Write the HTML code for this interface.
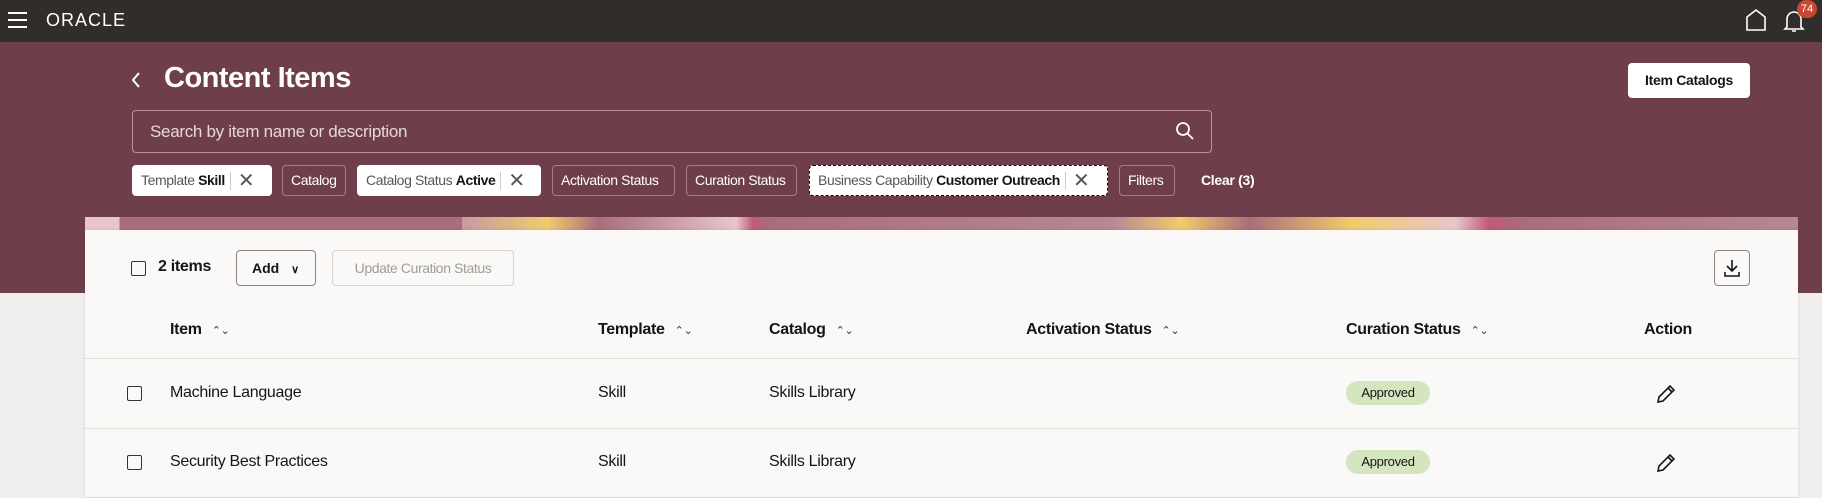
<!DOCTYPE html>
<html><head><meta charset="utf-8"><style>
*{box-sizing:border-box;margin:0;padding:0}
body{width:1822px;height:498px;overflow:hidden;font-family:"Liberation Sans",sans-serif;background:#f1efed;position:relative;color:#161513}
.a{position:absolute}
.top{left:0;top:0;width:1822px;height:42px;background:#312d2a}
.ban{left:0;top:42px;width:1822px;height:251px;background:#6f3e4b}
.chip{position:absolute;top:165px;height:31px;border:1px solid #a77d87;border-radius:4px;color:#fff;font-size:14px;letter-spacing:-0.4px;line-height:29px;padding:0 8px;white-space:nowrap;overflow:hidden}
.chip.w{background:#fff;color:#5a5551;border-color:#fff}
.chip.w b{color:#161513}
.x{display:inline-block;border-left:1px solid #ccc;height:18px;vertical-align:middle;margin-left:5px;padding-left:7px;line-height:18px;font-size:20px;color:#555}
.hd{position:absolute;top:321px;font-size:16px;font-weight:bold;letter-spacing:-0.3px}
.cell{position:absolute;font-size:16px;letter-spacing:-0.3px}
.cb{position:absolute;width:15px;height:15px;border:1.5px solid #333;border-radius:2px}
.pill{position:absolute;left:1346px;width:84px;height:24px;border-radius:12px;background:#d4e6c0;font-size:13px;text-align:center;line-height:24px;letter-spacing:-0.3px}
.line{position:absolute;left:85px;width:1713px;height:1px;background:#e0dedb}
.sort{font-size:11px;color:#333;margin-left:10px;font-weight:normal}
</style></head><body>
<div class="a top"></div>
<div class="a" style="left:8px;top:12px;width:19px;height:2px;background:#fff;box-shadow:0 7px 0 #fff,0 14px 0 #fff"></div>
<div class="a" style="left:46px;top:10px;color:#fff;font-size:18px;letter-spacing:1px">ORACLE</div>
<svg class="a" style="left:1745px;top:8px" width="22" height="24" viewBox="0 0 22 24"><path d="M2 22V9L11 2L20 9V22Z" fill="none" stroke="#fff" stroke-width="1.6"/></svg>
<svg class="a" style="left:1783px;top:8px" width="22" height="26" viewBox="0 0 22 26"><path d="M4 19V11a7 7 0 0 1 14 0v8l2 2H2z M9 23h4" fill="none" stroke="#fff" stroke-width="1.6"/></svg>
<div class="a" style="left:1797px;top:0;width:20px;height:18px;border-radius:9px;background:#c74634;color:#fff;font-size:11px;text-align:center;line-height:18px">74</div>
<div class="a ban"></div>
<div class="a" style="left:85px;top:217px;width:1713px;height:14px;background:linear-gradient(90deg,#e8c6cc 0,#e8c6cc 2%,#a86e7c 2%,#a86e7c 22%,#c59aa3 22%,#f1cc6c 27%,#a86e7c 30%,#e8c6cc 38%,#c05a78 39%,#a86e7c 40%,#b88794 60%,#f1cc6c 64%,#a86e7c 68%,#f1cc6c 74%,#e8c6cc 80%,#c05a78 82%,#a86e7c 84%,#b88794 100%)"></div>
<svg class="a" style="left:130px;top:71px" width="12" height="18"><path d="M9 2L3 9L9 16" fill="none" stroke="#fff" stroke-width="2"/></svg>
<div class="a" style="left:164px;top:62px;color:#fff;font-size:29px;font-weight:bold;letter-spacing:-0.5px">Content Items</div>
<div class="a" style="left:1628px;top:63px;width:122px;height:35px;background:#fff;border-radius:4px;font-size:14px;font-weight:bold;text-align:center;line-height:35px;letter-spacing:-0.3px">Item Catalogs</div>
<div class="a" style="left:132px;top:110px;width:1080px;height:43px;border:1px solid #b8959e;border-radius:4px;color:#e6d8dc;font-size:17px;line-height:41px;padding-left:17px;letter-spacing:-0.3px">Search by item name or description</div>
<svg class="a" style="left:1175px;top:121px" width="20" height="20"><circle cx="8" cy="8" r="6" fill="none" stroke="#fff" stroke-width="1.8"/><path d="M12.5 12.5L18 18" stroke="#fff" stroke-width="1.8"/></svg>
<div class="chip w" style="left:132px;width:140px">Template <b>Skill</b><span class="x">✕</span></div>
<div class="chip" style="left:282px;width:64px">Catalog</div>
<div class="chip w" style="left:357px;width:184px">Catalog Status <b>Active</b><span class="x">✕</span></div>
<div class="chip" style="left:552px;width:123px">Activation Status</div>
<div class="chip" style="left:686px;width:111px">Curation Status</div>
<div class="chip w" style="left:809px;width:299px;border:1px dashed #000">Business Capability <b>Customer Outreach</b><span class="x">✕</span></div>
<div class="chip" style="left:1119px;width:56px">Filters</div>
<div class="a" style="left:1201px;top:165px;color:#fff;font-size:14px;font-weight:bold;line-height:31px;letter-spacing:-0.3px">Clear (3)</div>
<div class="a" style="left:85px;top:230px;width:1713px;height:268px;background:#faf9f8;box-shadow:0 0 4px rgba(0,0,0,.1)"></div>
<div class="cb" style="left:131px;top:261px"></div>
<div class="a" style="left:158px;top:258px;font-size:16px;font-weight:bold;letter-spacing:-0.3px">2 items</div>
<div class="a" style="left:236px;top:250px;width:80px;height:36px;border:1px solid #8a8582;border-radius:4px;font-size:14px;font-weight:bold;line-height:34px;padding-left:15px">Add <span style="font-size:11px;margin-left:8px">∨</span></div>
<div class="a" style="left:332px;top:250px;width:182px;height:36px;border:1px solid #d6d3d0;border-radius:4px;font-size:14px;color:#a09c98;line-height:34px;text-align:center;letter-spacing:-0.4px">Update Curation Status</div>
<div class="a" style="left:1714px;top:250px;width:36px;height:36px;border:1px solid #8a8582;border-radius:4px"></div>
<svg class="a" style="left:1722px;top:258px" width="20" height="20"><path d="M10 2V13M5 8l5 5 5-5M3 14v4h14v-4" fill="none" stroke="#161513" stroke-width="1.6"/></svg>
<div class="hd" style="left:170px">Item<span class="sort">⌃⌄</span></div>
<div class="hd" style="left:598px">Template<span class="sort">⌃⌄</span></div>
<div class="hd" style="left:769px">Catalog<span class="sort">⌃⌄</span></div>
<div class="hd" style="left:1026px">Activation Status<span class="sort">⌃⌄</span></div>
<div class="hd" style="left:1346px">Curation Status<span class="sort">⌃⌄</span></div>
<div class="hd" style="left:1644px">Action</div>
<div class="line" style="top:358px"></div>
<div class="cb" style="left:127px;top:386px"></div>
<div class="cell" style="left:170px;top:384px">Machine Language</div>
<div class="cell" style="left:598px;top:384px">Skill</div>
<div class="cell" style="left:769px;top:384px">Skills Library</div>
<div class="pill" style="top:381px">Approved</div>
<svg class="a" style="left:1655px;top:383px" width="22" height="22"><path d="M3 19l1-5L15 3l4 4L8 18z M13 5l4 4" fill="none" stroke="#161513" stroke-width="1.6"/></svg>
<div class="line" style="top:428px"></div>
<div class="cb" style="left:127px;top:455px"></div>
<div class="cell" style="left:170px;top:453px">Security Best Practices</div>
<div class="cell" style="left:598px;top:453px">Skill</div>
<div class="cell" style="left:769px;top:453px">Skills Library</div>
<div class="pill" style="top:450px">Approved</div>
<svg class="a" style="left:1655px;top:452px" width="22" height="22"><path d="M3 19l1-5L15 3l4 4L8 18z M13 5l4 4" fill="none" stroke="#161513" stroke-width="1.6"/></svg>
<div class="line" style="top:497px"></div>
</body></html>
